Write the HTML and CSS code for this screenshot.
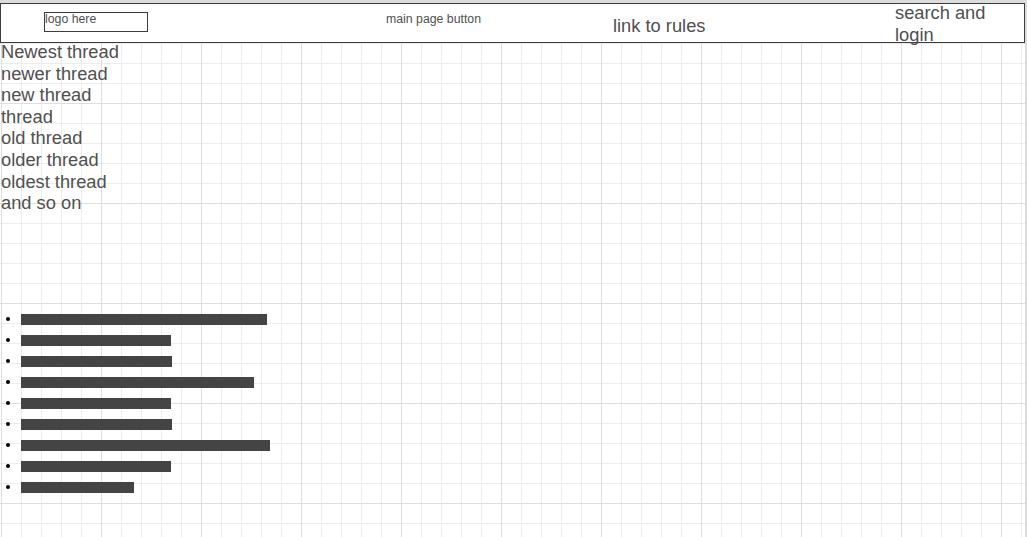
FILE: index.html
```html
<!DOCTYPE html>
<html>
<head>
<meta charset="utf-8">
<link rel="stylesheet" href="styles.css">
</head>
<body>
<div class="page">
  <header class="topbar">
    <div class="logo">logo here</div>
    <div class="main-btn">main page button</div>
    <div class="rules">link to rules</div>
    <div class="search">search and login</div>
  </header>
  <div class="threads">
    <div>Newest thread</div>
    <div>newer thread</div>
    <div>new thread</div>
    <div>thread</div>
    <div>old thread</div>
    <div>older thread</div>
    <div>oldest thread</div>
    <div>and so on</div>
  </div>
  <ul class="bars">
    <li><span class="bar" style="width:246px"></span></li>
    <li><span class="bar" style="width:150px"></span></li>
    <li><span class="bar" style="width:151px"></span></li>
    <li><span class="bar" style="width:233px"></span></li>
    <li><span class="bar" style="width:150px"></span></li>
    <li><span class="bar" style="width:151px"></span></li>
    <li><span class="bar" style="width:249px"></span></li>
    <li><span class="bar" style="width:150px"></span></li>
    <li><span class="bar" style="width:113px"></span></li>
  </ul>
</div>
</body>
</html>
```
FILE: styles.css
```css
html, body {
  margin: 0;
  padding: 0;
}
body {
  background: #dcdcdc;
  font-family: "Liberation Sans", Arial, sans-serif;
  color: #505050;
  overflow: hidden;
}
.page {
  margin-top: 3px;
  margin-right: 2px;
  height: 534px;
  overflow: hidden;
  background-color: #fff;
  background-image:
    linear-gradient(to right, #dedede 1px, transparent 1px),
    linear-gradient(to bottom, #dedede 1px, transparent 1px),
    linear-gradient(to right, #ececec 1px, transparent 1px),
    linear-gradient(to bottom, #ececec 1px, transparent 1px);
  background-size: 100px 100px, 100px 100px, 20px 20px, 20px 20px;
  background-position: 1px 0, 1px 0, 1px 0, 1px 0;
}
.topbar {
  box-sizing: border-box;
  height: 40px;
  border: 1px solid #3c3c3c;
  background: #fff;
  display: flex;
  align-items: flex-start;
}
.logo {
  box-sizing: border-box;
  margin-top: 8px;
  margin-left: 43px;
  width: 104px;
  height: 20px;
  border: 1px solid #3c3c3c;
  font-size: 12.3px;
  line-height: 12px;
  flex: 0 0 auto;
}
.main-btn {
  margin-top: 9px;
  margin-left: 238px;
  width: 227px;
  font-size: 12.3px;
  line-height: 12px;
  flex: 0 0 auto;
}
.rules {
  margin-top: 11px;
  width: 282px;
  font-size: 18.3px;
  line-height: 21.6px;
  flex: 0 0 auto;
}
.search {
  margin-top: -2px;
  flex: 1 1 auto;
  font-size: 18.3px;
  line-height: 21.6px;
}
.threads {
  margin-top: -2px;
  padding-left: 1px;
  font-size: 18.3px;
  line-height: 21.6px;
}
.bars {
  margin: 94px 0 0 0;
  padding-left: 21px;
  font-size: 13px;
  line-height: 21px;
  color: #000;
}
.bars li {
  height: 21px;
}
.bar {
  display: inline-block;
  height: 11px;
  vertical-align: middle;
  background: #444;
}
```
